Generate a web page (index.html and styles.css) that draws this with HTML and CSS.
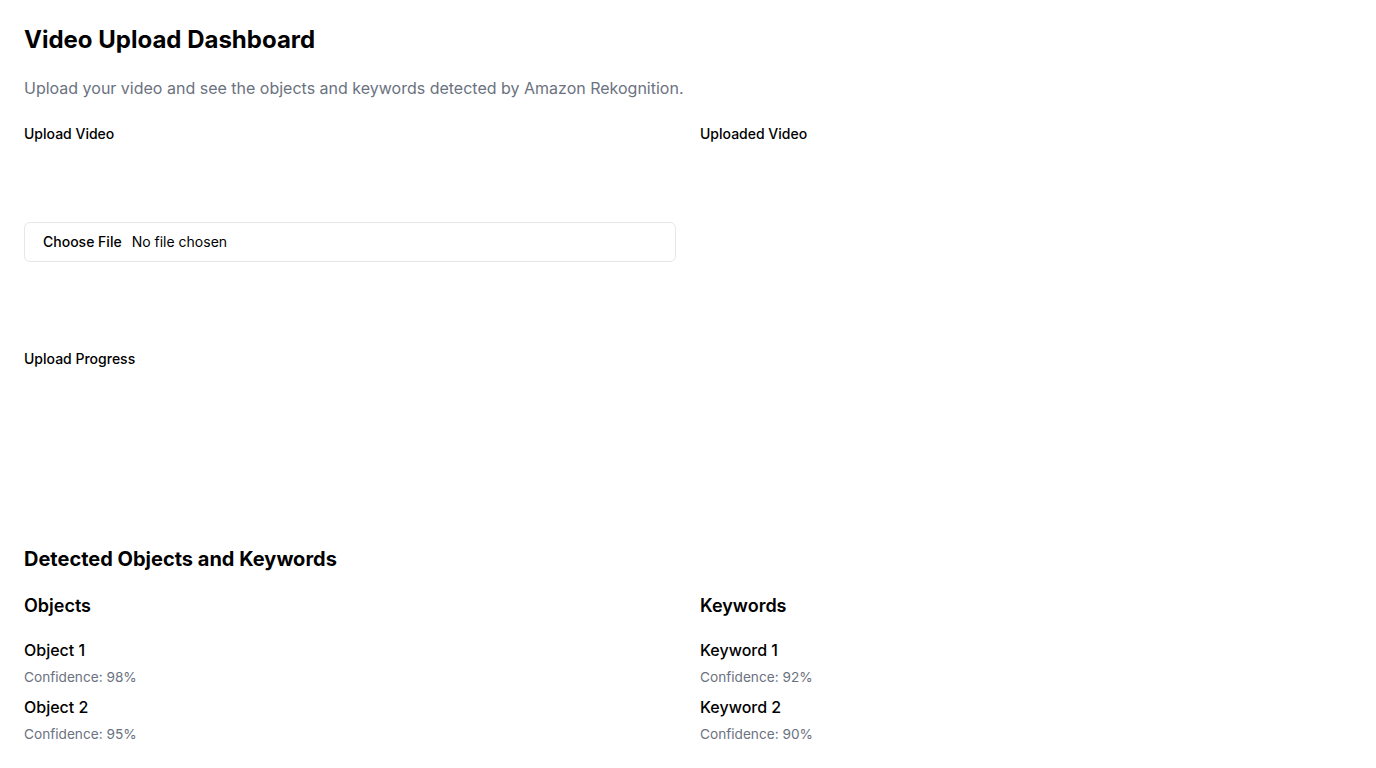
FILE: index.html
```html
<!DOCTYPE html>
<html lang="en">
<head>
<meta charset="utf-8">
<title>Video Upload Dashboard</title>
<link rel="stylesheet" href="styles.css">
</head>
<body>
<main class="page">
  <h1 class="title">Video Upload Dashboard</h1>
  <p class="subtitle">Upload your video and see the objects and keywords detected by Amazon Rekognition.</p>

  <section class="grid">
    <div class="col">
      <label class="label">Upload Video</label>
      <div class="file-input">
        <span class="file-btn">Choose File</span>
        <span class="file-name">No file chosen</span>
      </div>
      <label class="label progress-label">Upload Progress</label>
    </div>
    <div class="col">
      <label class="label">Uploaded Video</label>
    </div>
  </section>

  <h2 class="section-title">Detected Objects and Keywords</h2>
  <section class="grid">
    <div class="col">
      <h3 class="sub-title">Objects</h3>
      <ul class="list">
        <li class="item"><div class="item-name">Object 1</div><div class="item-conf">Confidence: 98%</div></li>
        <li class="item"><div class="item-name">Object 2</div><div class="item-conf">Confidence: 95%</div></li>
      </ul>
    </div>
    <div class="col">
      <h3 class="sub-title">Keywords</h3>
      <ul class="list">
        <li class="item"><div class="item-name">Keyword 1</div><div class="item-conf">Confidence: 92%</div></li>
        <li class="item"><div class="item-name">Keyword 2</div><div class="item-conf">Confidence: 90%</div></li>
      </ul>
    </div>
  </section>
</main>
</body>
</html>
```
FILE: styles.css
```css
* { box-sizing: border-box; }
html, body { margin: 0; padding: 0; background: #fff; }
body {
  font-family: Inter, "Liberation Sans", sans-serif;
  color: #000;
}
.page { padding: 24px; }
.title {
  margin: 0;
  font-size: 24px;
  line-height: 32px;
  font-weight: 700;
}
.subtitle {
  margin: 20px 0 24px;
  font-size: 16px;
  line-height: 24px;
  color: #6b7280;
}
.grid {
  display: grid;
  grid-template-columns: 1fr 1fr;
  column-gap: 24px;
}
.col { display: flex; flex-direction: column; align-items: flex-start; }
.label {
  display: block;
  font-size: 14px;
  line-height: 20px;
  font-weight: 500;
}
.file-input {
  margin-top: 78px;
  width: 100%;
  height: 40px;
  border: 1px solid #e5e7eb;
  border-radius: 6px;
  display: flex;
  align-items: center;
  padding: 0 18px 2px;
  font-size: 14px;
  gap: 10px;
}
.file-btn { font-weight: 500; }
.file-name { font-weight: 400; }
.progress-label { margin-top: 87px; }
.section-title {
  margin: 176px 0 0;
  font-size: 20px;
  line-height: 28px;
  font-weight: 700;
}
.section-title + .grid { margin-top: 19px; }
.sub-title {
  margin: 0 0 18px;
  font-size: 18px;
  line-height: 28px;
  font-weight: 600;
}
.list { list-style: none; margin: 0; padding: 0; }
.item { margin-bottom: 9px; }
.item-name { font-size: 16px; line-height: 24px; font-weight: 500; }
.item-conf { margin-top: 5px; font-size: 13.65px; line-height: 20px; color: #6b7280; }
.item + .item { margin-top: -1px; }
```
